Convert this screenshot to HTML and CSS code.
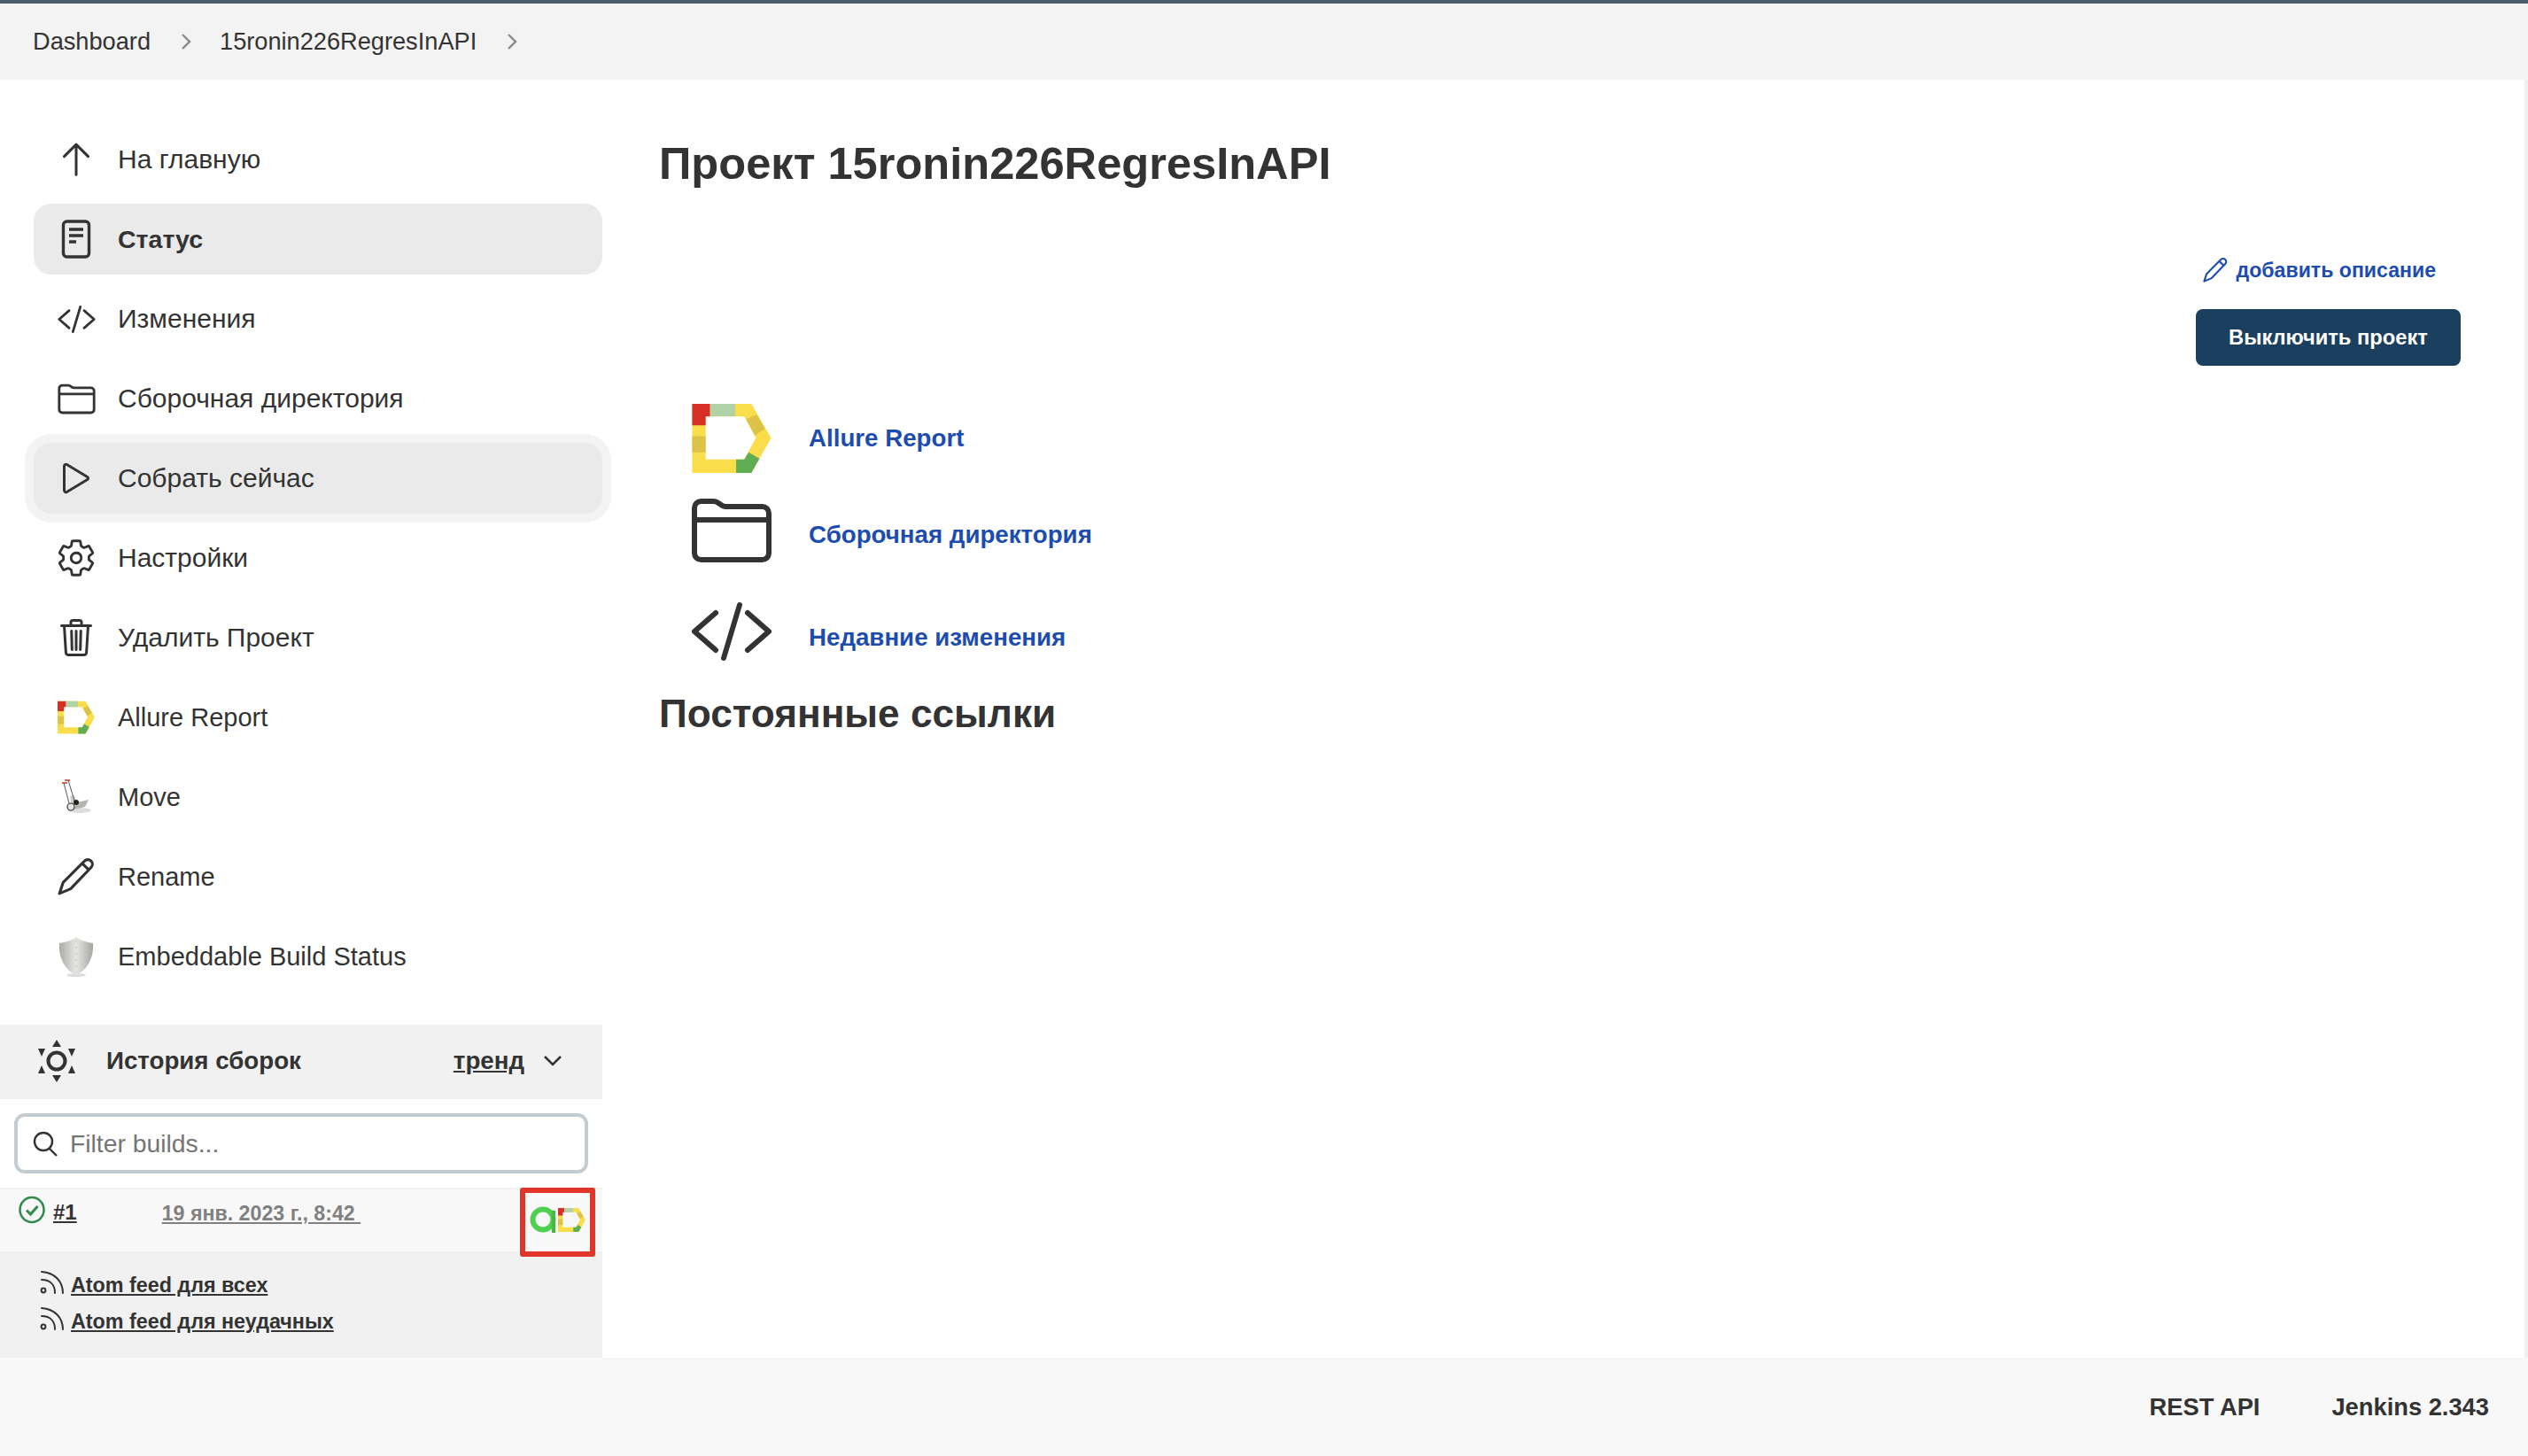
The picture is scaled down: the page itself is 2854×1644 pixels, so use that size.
FILE: index.html
```html
<!DOCTYPE html>
<html lang="ru">
<head>
  <meta charset="UTF-8" />
  <title>15ronin226RegresInAPI</title>
  <link rel="stylesheet" href="styles.css">
</head>
<body>
  <svg class="sprite" xmlns="http://www.w3.org/2000/svg">
    <symbol id="i-allure" viewBox="0 0 88 77">
      <path fill="#fadd4b" fill-rule="evenodd" d="M0 0H66L88 38L66 77H0ZM15 14V62H58L71 38L58 14Z"/>
      <path fill="#d62f26" d="M0 0H20V14H15V24H0Z"/>
      <path fill="#b1d2a9" d="M20 0H48V14H20Z"/>
      <path fill="#dcc246" d="M0 36H15V54H0ZM60 17L72 12L81 28L70 35Z"/>
      <path fill="#5fae54" d="M49 62H58L63 54L75 61L66 77H49Z"/>
    </symbol>
    <symbol id="i-folder" viewBox="0 0 512 512">
      <path class="stroke" d="M440 432H72a40 40 0 01-40-40V120a40 40 0 0140-40h75.89a40 40 0 0122.19 6.72l27.84 18.56a40 40 0 0022.19 6.72H440a40 40 0 0140 40v240a40 40 0 01-40 40zM32 192h448"/>
    </symbol>
    <symbol id="i-code" viewBox="0 0 512 512">
      <path class="stroke" d="M160 368L32 256l128-112M352 368l128-112-128-112M304 96l-96 320"/>
    </symbol>
    <symbol id="i-pencil" viewBox="0 0 40 40">
      <path class="stroke-thin" d="M2 38L6 26L29 3C31 1 34 1 36 3C38 5 38 8 36 10L14 33ZM27 6L33 12"/>
    </symbol>
    <symbol id="i-rss" viewBox="0 0 28 28">
      <circle cx="5" cy="23" r="2.4" fill="none" stroke="#333" stroke-width="2"/>
      <path fill="none" stroke="#333" stroke-width="2" stroke-linecap="round" d="M3 11C13 11 18 17 18 26M3 2C18 3 27 13 27 26"/>
    </symbol>
  </svg>

  <header class="crumbs">
    <a class="crumb">Dashboard</a>
    <svg class="crumb-sep" viewBox="0 0 12 20"><path d="M2 2l8 8-8 8"/></svg>
    <a class="crumb">15ronin226RegresInAPI</a>
    <svg class="crumb-sep" viewBox="0 0 12 20"><path d="M2 2l8 8-8 8"/></svg>
  </header>

  <div class="page">
    <aside class="side">
      <nav class="tasks">
        <a class="task">
          <span class="task-icon"><svg width="48" height="48" viewBox="0 0 512 512"><path class="stroke" d="M256 440V80M112 220L256 76l144 144"/></svg></span>
          На главную
        </a>
        <a class="task current">
          <span class="task-icon"><svg width="48" height="48" viewBox="0 0 48 48"><rect x="9.5" y="4" width="29" height="40" rx="4" class="stroke-doc"/><path class="stroke-doc" d="M16 13h16M16 20h16M16 27h8"/></svg></span>
          Статус
        </a>
        <a class="task">
          <span class="task-icon"><svg width="45" height="45"><use href="#i-code"/></svg></span>
          Изменения
        </a>
        <a class="task">
          <span class="task-icon"><svg width="45" height="45"><use href="#i-folder"/></svg></span>
          Сборочная директория
        </a>
        <a class="task hover">
          <span class="task-icon"><svg width="48" height="48" viewBox="0 0 512 512"><path class="stroke" d="M112 111v290c0 17.44 17 28.52 31 20.16l247.9-148.37c12.12-7.25 12.12-26.33 0-33.58L143 90.84c-14-8.36-31 2.72-31 20.16z"/></svg></span>
          Собрать сейчас
        </a>
        <a class="task">
          <span class="task-icon"><svg width="46" height="46" viewBox="0 0 512 512"><path class="stroke" d="M262.29 192.31a64 64 0 1057.4 57.4 64.13 64.13 0 00-57.4-57.4zM416.39 256a154.34 154.34 0 01-1.53 20.79l45.21 35.46a10.81 10.81 0 012.45 13.75l-42.77 74a10.81 10.81 0 01-13.14 4.59l-44.9-18.08a16.11 16.11 0 00-15.17 1.75A164.48 164.48 0 01325 400.8a15.94 15.94 0 00-8.82 12.14l-6.73 47.89a11.08 11.08 0 01-10.68 9.17h-85.54a11.11 11.11 0 01-10.69-8.87l-6.72-47.82a16.07 16.07 0 00-9-12.22 155.3 155.3 0 01-21.46-12.57 16 16 0 00-15.11-1.71l-44.89 18.07a10.81 10.81 0 01-13.14-4.58l-42.77-74a10.8 10.8 0 012.45-13.75l38.21-30a16.05 16.05 0 006-14.08c-.36-4.17-.58-8.33-.58-12.5s.21-8.27.58-12.35a16 16 0 00-6.07-13.94l-38.19-30A10.81 10.81 0 0149.48 186l42.77-74a10.81 10.81 0 0113.14-4.59l44.9 18.08a16.11 16.11 0 0015.17-1.75A164.48 164.48 0 01187 111.2a15.94 15.94 0 008.82-12.14l6.73-47.89A11.08 11.08 0 01213.23 42h85.54a11.11 11.11 0 0110.69 8.87l6.72 47.82a16.07 16.07 0 009 12.22 155.3 155.3 0 0121.46 12.57 16 16 0 0015.11 1.71l44.89-18.07a10.81 10.81 0 0113.14 4.58l42.77 74a10.8 10.8 0 01-2.45 13.75l-38.21 30a16.05 16.05 0 00-6.05 14.08c.33 4.14.55 8.3.55 12.47z"/></svg></span>
          Настройки
        </a>
        <a class="task">
          <span class="task-icon"><svg width="48" height="48" viewBox="0 0 512 512"><path class="stroke" d="M112 112l20 320c.95 18.49 14.4 32 32 32h184c17.67 0 30.87-13.51 32-32l20-320M80 112h352M192 112V72a24 24 0 0124-24h80a24 24 0 0124 24v40M256 176v224M200 176l6 224M312 176l-6 224"/></svg></span>
          Удалить Проект
        </a>
        <a class="task latin">
          <span class="task-icon"><svg width="42" height="40"><use href="#i-allure"/></svg></span>
          Allure Report
        </a>
        <a class="task latin">
          <span class="task-icon">
            <svg width="48" height="48" viewBox="0 0 48 48">
              <ellipse cx="28" cy="39" rx="13" ry="3" fill="#ddd"/>
              <path d="M25 30L38 27L34 35L21 38Z" fill="#b4b4b0"/>
              <path d="M17 23L22 22L25 32L19 35Z" fill="#cfcfcb"/>
              <path d="M15 5L22 28M10 8L16 31" fill="none" stroke="#555" stroke-width="1"/>
              <path d="M8 8h6M11 5h6" fill="none" stroke="#c0392b" stroke-width="1.3"/>
              <circle cx="24" cy="30" r="3" fill="#222"/>
              <circle cx="18" cy="35" r="4" fill="#e6e6e4" stroke="#333" stroke-width="1.2"/>
            </svg>
          </span>
          Move
        </a>
        <a class="task latin">
          <span class="task-icon"><svg width="42" height="42"><use href="#i-pencil"/></svg></span>
          Rename
        </a>
        <a class="task latin">
          <span class="task-icon">
            <svg width="42" height="48" viewBox="0 0 42 48">
              <defs>
                <linearGradient id="shield" x1="0" x2="1" y1="0" y2="0">
                  <stop offset="0" stop-color="#a9aba6"/>
                  <stop offset="0.5" stop-color="#e6e6e2"/>
                  <stop offset="1" stop-color="#a4a6a1"/>
                </linearGradient>
              </defs>
              <ellipse cx="21" cy="45" rx="11" ry="2" fill="#dcdcdc"/>
              <path d="M21 2C26 6 33 8 40 9C41 22 36 38 21 45C6 38 1 22 2 9C9 8 16 6 21 2Z" fill="url(#shield)"/>
              <path d="M21 6V42" stroke="#bdbdb9" stroke-width="1" stroke-dasharray="2 5"/>
            </svg>
          </span>
          Embeddable Build Status
        </a>
      </nav>

      <section class="history">
        <div class="history-head">
          <svg class="history-icon" width="44" height="50" viewBox="0 0 44 50">
            <circle cx="22" cy="25" r="9.5" fill="none" stroke="#333" stroke-width="4"/>
            <path fill="#333" d="M22 1l5 8H17ZM22 49l-5-8h10ZM1 11h8l-4 9ZM43 11h-8l4 9ZM1 39h8l-4-9ZM43 39h-8l4-9Z"/>
          </svg>
          <span class="history-title">История сборок</span>
          <a class="trend">тренд</a>
          <svg class="trend-arrow" width="22" height="14" viewBox="0 0 22 14"><path d="M2 2l9 9 9-9"/></svg>
        </div>
        <div class="filter-wrap">
          <label class="filter">
            <svg width="28" height="30" viewBox="0 0 28 30"><circle cx="12" cy="13" r="10" class="stroke-search"/><path class="stroke-search" d="M19 21l8 8"/></svg>
            <input class="filter-input" type="text" placeholder="Filter builds...">
          </label>
        </div>
        <div class="build">
          <svg class="build-ok" width="30" height="32" viewBox="0 0 30 32"><ellipse cx="15" cy="16" rx="13.5" ry="14" fill="none" stroke="#2e8b4a" stroke-width="2.5"/><path d="M9 16.5l4.5 4.5 8-9" fill="none" stroke="#2e8b4a" stroke-width="3"/></svg>
          <a class="build-no">#1</a>
          <a class="build-date">19 янв. 2023 г., 8:42&nbsp;</a>
          <div class="badge-box">
            <svg width="32" height="32" viewBox="0 0 32 32">
              <circle cx="15" cy="16" r="11.5" fill="none" stroke="#4fd04f" stroke-width="6"/>
              <path d="M27 6v25" stroke="#43b843" stroke-width="4"/>
            </svg>
            <svg width="31" height="29"><use href="#i-allure"/></svg>
          </div>
        </div>
        <div class="feeds">
          <a class="feed"><svg width="28" height="28"><use href="#i-rss"/></svg><span>Atom feed для всех</span></a>
          <a class="feed"><svg width="28" height="28"><use href="#i-rss"/></svg><span>Atom feed для неудачных</span></a>
        </div>
      </section>
    </aside>

    <main class="main">
      <h1 class="title">Проект 15ronin226RegresInAPI</h1>
      <div class="actions">
        <a class="add-desc"><svg width="28" height="28"><use href="#i-pencil"/></svg>добавить описание</a>
        <button class="disable-btn">Выключить проект</button>
      </div>
      <ul class="links">
        <li class="link-row row-allure">
          <svg class="link-icon" width="90" height="78"><use href="#i-allure"/></svg>
          <a class="link">Allure Report</a>
        </li>
        <li class="link-row row-folder">
          <svg class="link-icon" width="96" height="96"><use href="#i-folder"/></svg>
          <a class="link">Сборочная директория</a>
        </li>
        <li class="link-row row-code">
          <svg class="link-icon" width="96" height="96"><use href="#i-code"/></svg>
          <a class="link">Недавние изменения</a>
        </li>
      </ul>
      <h2 class="perma">Постоянные ссылки</h2>
    </main>
  </div>

  <footer class="foot">
    <a class="foot-link">REST API</a>
    <a class="foot-link">Jenkins 2.343</a>
  </footer>
</body>
</html>
```

FILE: styles.css
```css
html, body {
  margin: 0;
  height: 100%;
}
body {
  display: flex;
  flex-direction: column;
  height: 1644px;
  overflow: hidden;
  font-family: "Liberation Sans", Arial, sans-serif;
  color: #333;
  background: #fff;
}
.sprite {
  display: none;
}
.stroke {
  fill: none;
  stroke: #333;
  stroke-width: 32px;
  stroke-linecap: round;
  stroke-linejoin: round;
}
.stroke-thin {
  fill: none;
  stroke: currentColor;
  stroke-width: 3px;
  stroke-linejoin: round;
}
.stroke-doc {
  fill: none;
  stroke: #333;
  stroke-width: 3.4px;
}
.stroke-search {
  fill: none;
  stroke: #333;
  stroke-width: 2.4px;
}

/* breadcrumbs */
.crumbs {
  display: flex;
  align-items: center;
  height: 86px;
  flex: none;
  padding-left: 37px;
  border-top: 4px solid #4c5e6e;
  background: #f3f3f3;
}
.crumb {
  font-size: 27.2px;
}
.crumb-sep {
  width: 12px;
  height: 20px;
  margin: 0 32px 0 34px;
  fill: none;
  stroke: #888;
  stroke-width: 2.4px;
}

.page {
  display: flex;
  flex: 1;
  min-height: 0;
}

/* left column */
.side {
  display: flex;
  flex-direction: column;
  width: 680px;
  flex: none;
}
.tasks {
  display: flex;
  flex-direction: column;
  gap: 10px;
  padding: 50px 0 37px 38px;
}
.task {
  display: flex;
  align-items: center;
  gap: 23px;
  height: 80px;
  padding-left: 24px;
  border-radius: 20px;
  font-size: 30px;
}
.task.latin {
  font-size: 29px;
}
.task-icon {
  display: flex;
  justify-content: center;
  align-items: center;
  width: 48px;
}
.task.current {
  background: #eaeaea;
  font-size: 28.5px;
  font-weight: bold;
}
.task.hover {
  background: #eaeaea;
  box-shadow: 0 0 0 10px #f3f3f3;
}

.history {
  display: flex;
  flex-direction: column;
  flex: 1;
}
.history-head {
  display: flex;
  align-items: center;
  height: 84px;
  padding: 0 0 2px 42px;
  box-sizing: border-box;
  background: #f1f1f1;
}
.history-title {
  margin-left: 34px;
  font-size: 27.7px;
  font-weight: bold;
}
.trend {
  margin-left: auto;
  font-size: 27.7px;
  font-weight: bold;
  text-decoration: underline;
}
.trend-arrow {
  margin: 0 45px 0 21px;
  fill: none;
  stroke: #333;
  stroke-width: 2.6px;
}
.filter-wrap {
  padding: 16px;
}
.filter {
  display: flex;
  align-items: center;
  gap: 14px;
  height: 60px;
  padding: 0 17px;
  border: 4px solid #c3ccd1;
  border-radius: 12px;
}
.filter-input {
  flex: 1;
  border: 0;
  outline: 0;
  padding: 0;
  font-family: inherit;
  font-size: 28.3px;
}
.filter-input::placeholder {
  color: #757575;
}
.build {
  position: relative;
  display: flex;
  align-items: flex-start;
  height: 72px;
  padding-left: 21px;
  background: #f8f8f8;
  border-top: 2px solid #f1f1f1;
  box-sizing: border-box;
}
.build-ok {
  margin-top: 7px;
}
.build-no {
  margin: 12px 0 0 9px;
  font-size: 24px;
  font-weight: bold;
  text-decoration: underline;
}
.build-date {
  margin: 14px 0 0 96px;
  font-size: 23.2px;
  font-weight: bold;
  color: #808080;
  text-decoration: underline;
}
/* red marker drawn over the build row */
.badge-box {
  position: absolute;
  top: -2px;
  right: 8px;
  display: flex;
  align-items: center;
  justify-content: center;
  box-sizing: border-box;
  width: 85px;
  height: 78px;
  padding-bottom: 6px;
  border: 6px solid #e0352b;
  border-radius: 3px;
}
.feeds {
  display: flex;
  flex-direction: column;
  gap: 13px;
  flex: 1;
  padding: 21px 0 0 44px;
  background: #f1f1f1;
}
.feed {
  display: flex;
  align-items: flex-start;
  gap: 8px;
  height: 28px;
  font-size: 23.3px;
  font-weight: bold;
}
.feed span {
  margin-top: 4px;
  text-decoration: underline;
}

/* main column */
.main {
  flex: 1;
  padding: 65px 72px 0 64px;
  border-right: 4px solid #f0f0f0;
}
.title {
  margin: 0;
  font-size: 50.6px;
  line-height: 60px;
}
.actions {
  display: flex;
  flex-direction: column;
  align-items: flex-end;
  gap: 26px;
  margin-top: 72px;
}
.add-desc {
  display: flex;
  align-items: center;
  gap: 10px;
  height: 36px;
  margin-right: 28px;
  font-size: 23.1px;
  font-weight: bold;
  color: #1d4cb0;
}
.disable-btn {
  width: 299px;
  height: 64px;
  border: 0;
  border-radius: 8px;
  background: #1b3f5e;
  color: #fff;
  font-family: inherit;
  font-size: 23.7px;
  font-weight: bold;
}
.links {
  margin: 37px 0 0;
  padding: 0 0 0 37px;
  list-style: none;
}
.link-row {
  display: flex;
  align-items: center;
  gap: 42px;
}
.row-allure {
  height: 90px;
}
.row-folder {
  height: 128px;
}
.row-folder .link-icon {
  margin: 0 -3px 10px;
}
.row-code {
  height: 104px;
}
.row-code .link-icon {
  margin: 0 -3px 14px;
}
.link {
  font-size: 27.7px;
  font-weight: bold;
  color: #1d4cb0;
}
.perma {
  margin: 6px 0 0;
  font-size: 44.2px;
  line-height: 56px;
}

/* footer */
.foot {
  display: flex;
  justify-content: flex-end;
  align-items: center;
  gap: 81px;
  height: 111px;
  flex: none;
  padding-right: 44px;
  background: #f8f8f8;
}
.foot-link {
  font-size: 27.3px;
  font-weight: bold;
}
```
